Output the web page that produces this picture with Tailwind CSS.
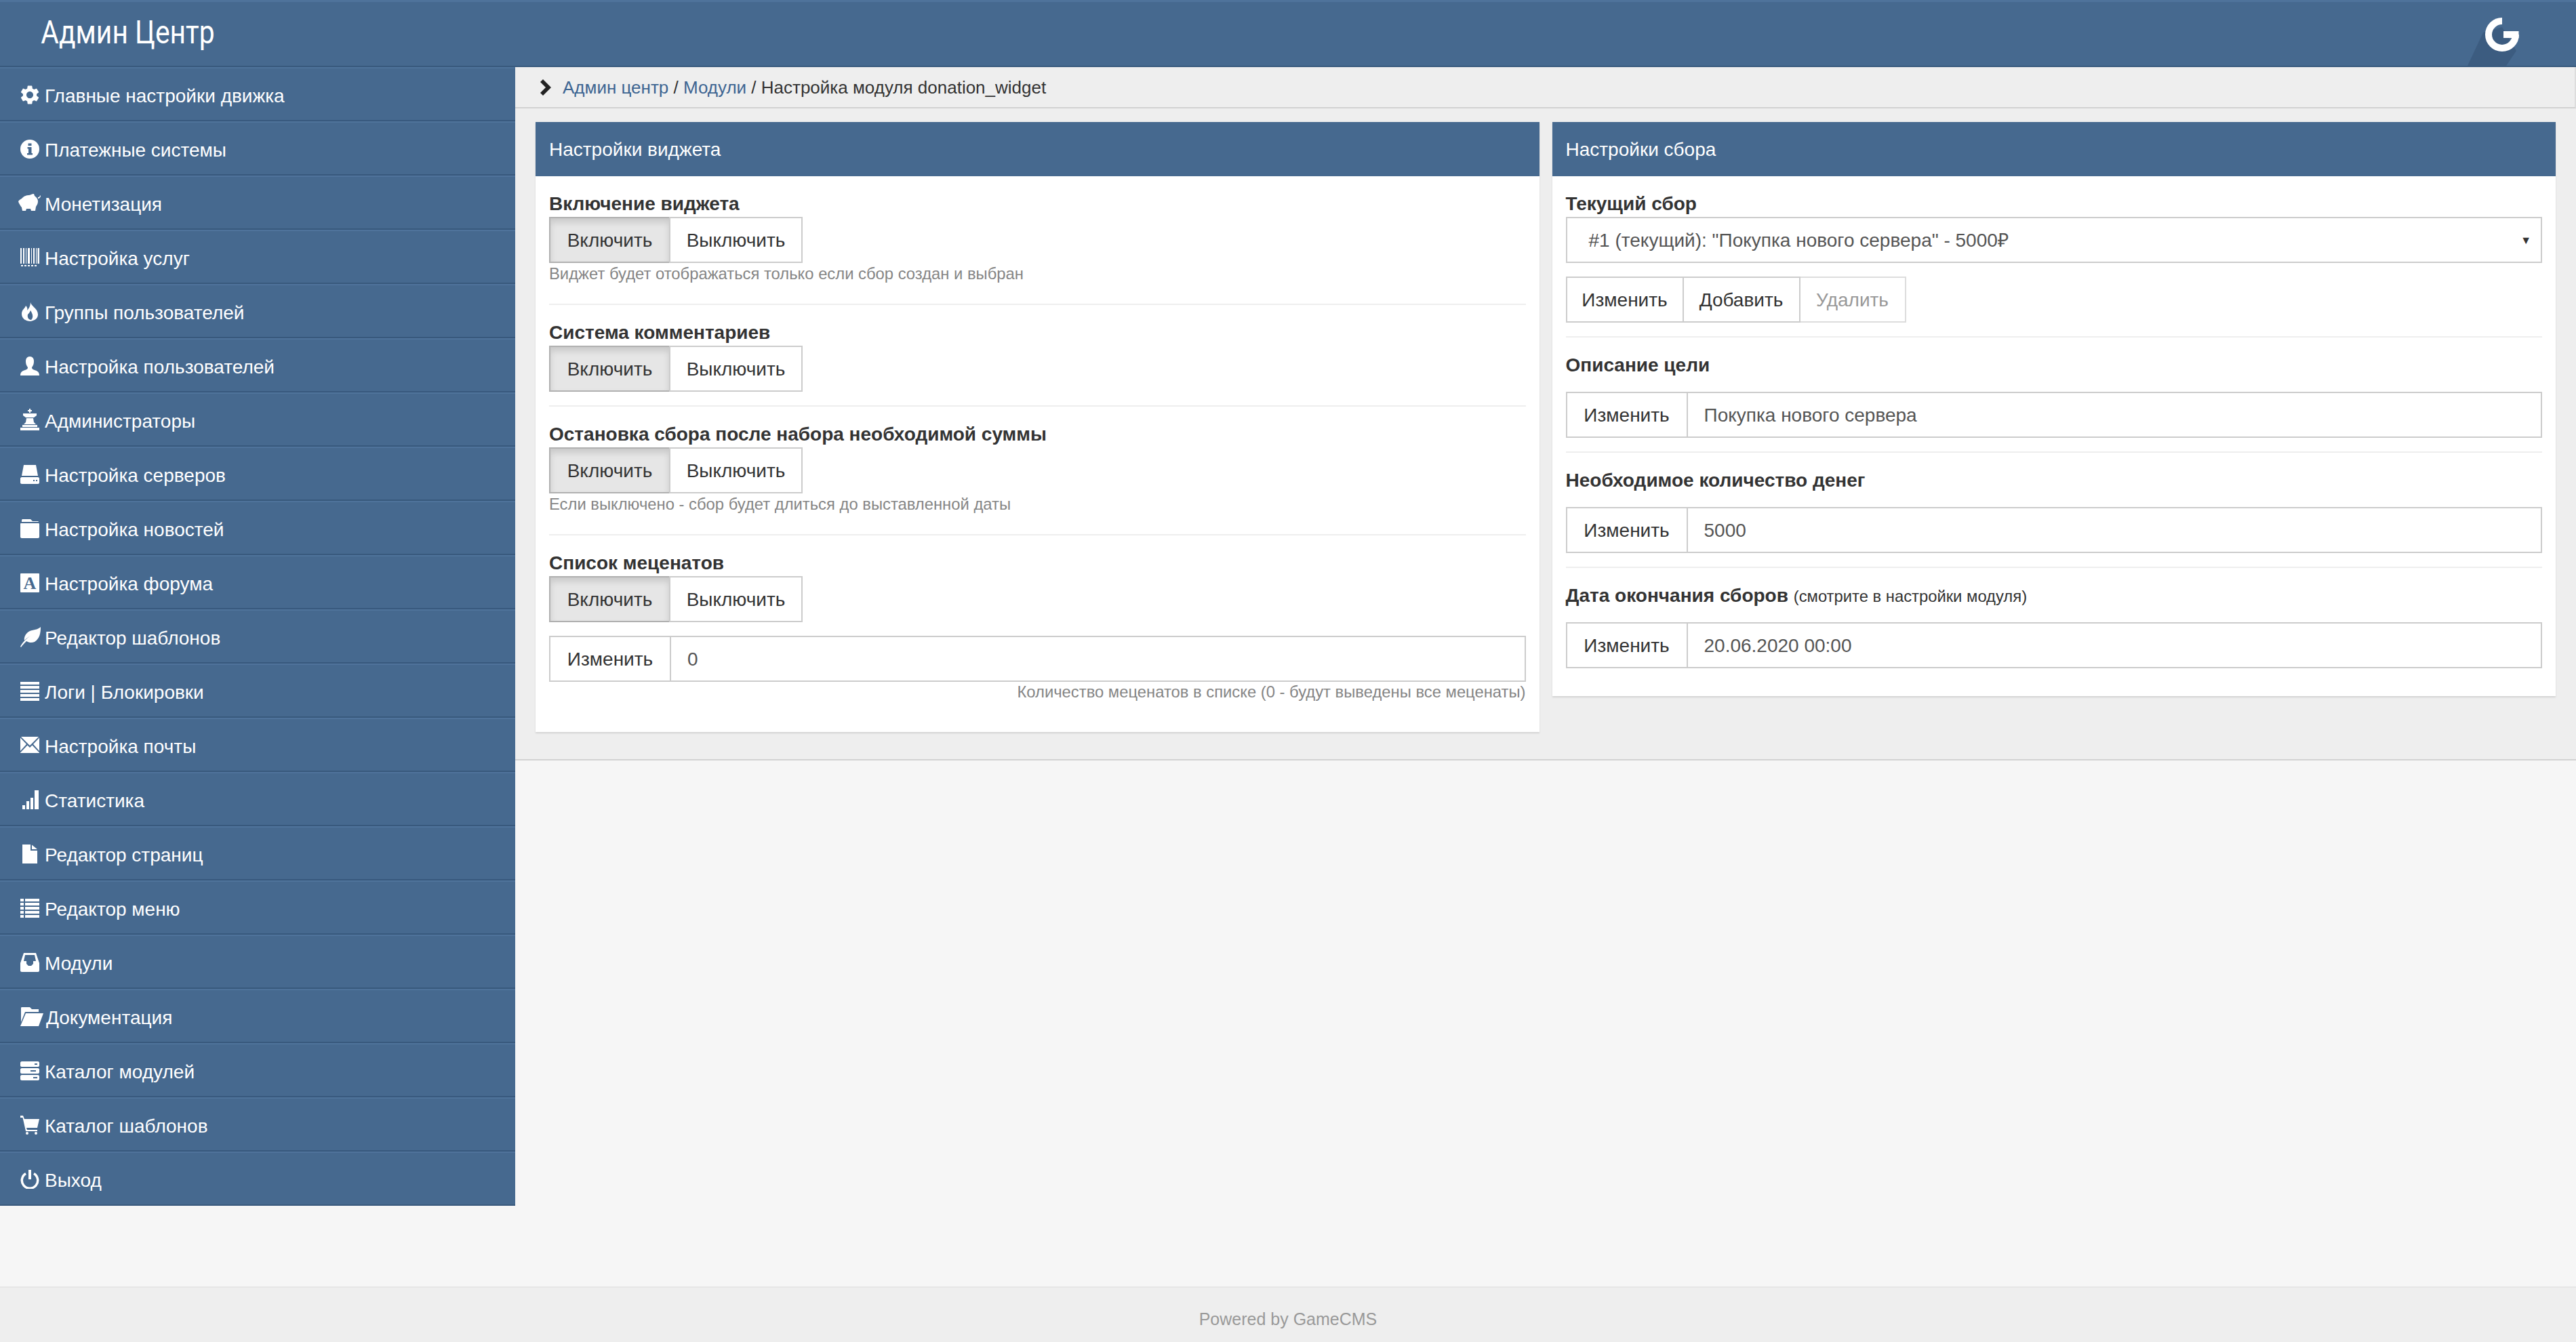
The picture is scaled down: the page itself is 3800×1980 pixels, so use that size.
<!DOCTYPE html>
<html lang="ru">
<head>
  <meta charset="UTF-8" />
  <title>Админ Центр</title>
  <script src="https://cdn.jsdelivr.net/npm/@tailwindcss/browser@4"></script>
</head>
<body class="bg-[#f6f6f6] text-[#333] font-['Liberation_Sans',sans-serif] text-[28px]">
<div class="flex flex-col h-screen overflow-hidden">

  <!-- шапка -->
  <header class="h-[99px] shrink-0 flex items-center justify-between bg-[#46698f] border-t-[3px] border-t-[#4f739b] border-b-2 border-b-[#38597d]">
    <div class="pl-[71px] pb-[4px] text-[48px] leading-none text-white font-['Roboto',sans-serif] origin-left scale-x-[0.85]">Админ Центр</div>
    <svg class="w-[80px] h-[94px] mr-[80px] self-end" viewBox="0 3 80 94">
      <polygon points="23,48 0,97 57,97 72,75 51,40" fill="#3c5c80" />
      <path d="M51 31 A20 20 0 1 0 71 51" fill="none" stroke="#fff" stroke-width="10" />
      <rect x="53" y="46" width="22.5" height="10" fill="#fff" />
    </svg>
  </header>

  <div class="flex flex-1 min-h-0">
    <!-- меню -->
    <aside class="w-[760px] shrink-0 self-start text-white">
      <a class="flex items-center gap-[8px] h-[80px] pt-[5px] pl-[30px] bg-[#46698f] border-t-2 border-t-[#4f739b] border-b-2 border-b-[#38597d]">
        <svg class="w-[28px] h-[28px] fill-white shrink-0 mb-[4px]" viewBox="2.500 2 19 20"><path d="M19.14 12.94c.04-.3.06-.61.06-.94 0-.32-.02-.64-.07-.94l2.03-1.58c.18-.14.23-.41.12-.61l-1.92-3.32c-.12-.22-.37-.29-.59-.22l-2.39.96c-.5-.38-1.03-.7-1.62-.94l-.36-2.54c-.04-.24-.24-.41-.48-.41h-3.84c-.24 0-.43.17-.47.41l-.36 2.54c-.59.24-1.13.57-1.62.94l-2.39-.96c-.22-.08-.47 0-.59.22L2.74 8.87c-.12.21-.08.47.12.61l2.03 1.58c-.05.3-.09.63-.09.94s.02.64.07.94l-2.03 1.58c-.18.14-.23.41-.12.61l1.92 3.32c.12.22.37.29.59.22l2.39-.96c.5.38 1.03.7 1.62.94l.36 2.54c.05.24.24.41.48.41h3.84c.24 0 .44-.17.47-.41l.36-2.54c.59-.24 1.13-.56 1.62-.94l2.39.96c.22.08.47 0 .59-.22l1.92-3.32c.12-.22.07-.47-.12-.61l-2.01-1.58zM12 15.6c-1.98 0-3.6-1.62-3.6-3.6s1.62-3.6 3.6-3.6 3.6 1.62 3.6 3.6-1.62 3.6-3.6 3.6z"/></svg>
        Главные настройки движка
      </a>
      <a class="flex items-center gap-[8px] h-[80px] pt-[5px] pl-[30px] bg-[#46698f] border-t-2 border-t-[#4f739b] border-b-2 border-b-[#38597d]">
        <svg class="w-[28px] h-[28px] fill-white shrink-0 mb-[4px]" viewBox="0 0 28 28"><path fill-rule="evenodd" d="M14 0a14 14 0 1 0 0 28a14 14 0 0 0 0-28zM11.500 5.500h5v3.500h-5zM10.500 11h6v9h1.500v2.500h-8V20h2v-6.500h-1.500z"/></svg>
        Платежные системы
      </a>
      <a class="flex items-center gap-[8px] h-[80px] pt-[5px] pl-[30px] bg-[#46698f] border-t-2 border-t-[#4f739b] border-b-2 border-b-[#38597d]">
        <svg class="w-[33px] h-[26px] -ml-[3px] -mr-[2px] fill-white shrink-0 mb-[6px]" viewBox="0 0 33 26"><path d="M0 11C2 8 4 8 6 6C9 3 12 2 15 2C18 2 20 0 23 0L24 3C27 5 29 8 29 11C29 15 27 17 26 19L25 25H19L18 22H12L11 25H6L5 20C3 18 2 15 1 14ZM29 5C31 5 32 4 32 2L33 3C33 5 31 7 29 7Z"/></svg>
        Монетизация
      </a>
      <a class="flex items-center gap-[8px] h-[80px] pt-[5px] pl-[30px] bg-[#46698f] border-t-2 border-t-[#4f739b] border-b-2 border-b-[#38597d]">
        <svg class="w-[28px] h-[28px] fill-white shrink-0 mb-[4px]" viewBox="0 0 28 28"><path d="M0 0h2v23H0zM4 0h2v23H4zM8 0h1v23H8zM11 0h3v23h-3zM16 0h1v23h-1zM19 0h2v23h-2zM23 0h1v23h-1zM25.500 0H28v23h-2.500zM1 25h3v2H1zM6 25h3v2H6zM11 25h3v2h-3zM16 25h3v2h-3zM21 25h3v2h-3z"/></svg>
        Настройка услуг
      </a>
      <a class="flex items-center gap-[8px] h-[80px] pt-[5px] pl-[30px] bg-[#46698f] border-t-2 border-t-[#4f739b] border-b-2 border-b-[#38597d]">
        <svg class="w-[28px] h-[28px] fill-white shrink-0 mb-[4px]" viewBox="0 0 28 28"><path fill-rule="evenodd" d="M15 0C16 6 26 9 26 18C26 24 21 27 15 28C8 28 2 24 2 17C2 11 7 9 8 5C10 7 11 9 10 12C13 9 15 5 15 0ZM15 12C18 17 20 22 16 26C12 26 10 22 11 18C12 17 14 15 15 12Z"/></svg>
        Группы пользователей
      </a>
      <a class="flex items-center gap-[8px] h-[80px] pt-[5px] pl-[30px] bg-[#46698f] border-t-2 border-t-[#4f739b] border-b-2 border-b-[#38597d]">
        <svg class="w-[28px] h-[28px] fill-white shrink-0 mb-[4px]" viewBox="0 0 28 28"><path d="M14 0C18 0 20 3 20 7C20 11 19 13 17 16C17 18 18 19 21 20C25 21 28 23 28 28H0C0 23 3 21 7 20C10 19 11 18 11 16C9 13 8 11 8 7C8 3 10 0 14 0Z"/></svg>
        Настройка пользователей
      </a>
      <a class="flex items-center gap-[8px] h-[80px] pt-[5px] pl-[30px] bg-[#46698f] border-t-2 border-t-[#4f739b] border-b-2 border-b-[#38597d]">
        <svg class="w-[28px] h-[32px] fill-white shrink-0 mb-[6px]" viewBox="0 0 28 32"><path d="M13 0h2v2h2v2h-2v2h-2V4h-2V2h2zM4 7h20v3l-4 3H8l-4-3zM9 14h10l1 6 3 3H5l3-3zM3 24h22v3H3zM0 28h28v4H0z"/></svg>
        Администраторы
      </a>
      <a class="flex items-center gap-[8px] h-[80px] pt-[5px] pl-[30px] bg-[#46698f] border-t-2 border-t-[#4f739b] border-b-2 border-b-[#38597d]">
        <svg class="w-[28px] h-[28px] fill-white shrink-0 mb-[4px]" viewBox="0 0 28 28"><path fill-rule="evenodd" d="M5 0H23L26 16H2ZM2 18H26C27 18 28 19 28 20V26C28 27 27 28 26 28H2C1 28 0 27 0 26V20C0 19 1 18 2 18ZM19 22v2h2v-2zM23 22v2h2v-2z"/></svg>
        Настройка серверов
      </a>
      <a class="flex items-center gap-[8px] h-[80px] pt-[5px] pl-[30px] bg-[#46698f] border-t-2 border-t-[#4f739b] border-b-2 border-b-[#38597d]">
        <svg class="w-[28px] h-[28px] fill-white shrink-0 mb-[4px]" viewBox="0 0 28 28"><path d="M3 0H15L18 3H25C26 3 27 3 27 4H2C2 3 2 0 3 0ZM1 6H27C28 6 28 7 28 8V26C28 27 27 28 26 28H2C1 28 0 27 0 26V7C0 7 0 6 1 6Z"/></svg>
        Настройка новостей
      </a>
      <a class="flex items-center gap-[8px] h-[80px] pt-[5px] pl-[30px] bg-[#46698f] border-t-2 border-t-[#4f739b] border-b-2 border-b-[#38597d]">
        <svg class="w-[28px] h-[28px] shrink-0 mb-[4px]" viewBox="0 0 28 28"><rect width="28" height="28" rx="1" fill="#fff" /><text x="14" y="23" text-anchor="middle" font-family="Liberation Serif, serif" font-weight="700" font-size="26" fill="#46698f">A</text></svg>
        Настройка форума
      </a>
      <a class="flex items-center gap-[8px] h-[80px] pt-[5px] pl-[30px] bg-[#46698f] border-t-2 border-t-[#4f739b] border-b-2 border-b-[#38597d]">
        <svg class="w-[30px] h-[30px] -mr-[2px] fill-white shrink-0 mb-[4px]" viewBox="0 0 30 30"><path d="M30 0C30 8 29 17 21 22C17 24 12 23 9 21C6 24 3 27 1 30L0 29C3 23 9 17 15 13C11 15 8 18 6 20C5 15 8 9 14 6C20 4 26 4 30 0Z"/></svg>
        Редактор шаблонов
      </a>
      <a class="flex items-center gap-[8px] h-[80px] pt-[5px] pl-[30px] bg-[#46698f] border-t-2 border-t-[#4f739b] border-b-2 border-b-[#38597d]">
        <svg class="w-[28px] h-[28px] fill-white shrink-0 mb-[4px]" viewBox="0 0 28 28"><path d="M0 0h28v4H0zM0 6h28v4H0zM0 12h28v4H0zM0 18h28v4H0zM0 24h28v4H0z"/></svg>
        Логи | Блокировки
      </a>
      <a class="flex items-center gap-[8px] h-[80px] pt-[5px] pl-[30px] bg-[#46698f] border-t-2 border-t-[#4f739b] border-b-2 border-b-[#38597d]">
        <svg class="w-[28px] h-[24px] fill-white shrink-0 mb-[6px]" viewBox="0 0 28 24"><path d="M1 0H27L14 13ZM0 1.500L9 11 0 21ZM28 1.500L19 11 28 21ZM10.500 12.500L14 16 17.500 12.500 28 23.500V24H0V23.500Z"/></svg>
        Настройка почты
      </a>
      <a class="flex items-center gap-[8px] h-[80px] pt-[5px] pl-[30px] bg-[#46698f] border-t-2 border-t-[#4f739b] border-b-2 border-b-[#38597d]">
        <svg class="w-[28px] h-[28px] fill-white shrink-0 mb-[4px]" viewBox="0 0 28 28"><path d="M3 22h4v6H3zM9 16h4v12H9zM15 11h4v17h-4zM21 0h6v28h-6z"/></svg>
        Статистика
      </a>
      <a class="flex items-center gap-[8px] h-[80px] pt-[5px] pl-[30px] bg-[#46698f] border-t-2 border-t-[#4f739b] border-b-2 border-b-[#38597d]">
        <svg class="w-[28px] h-[28px] fill-white shrink-0 mb-[4px]" viewBox="0 0 28 28"><path d="M3 0H15V9H25V28H3ZM17 0.500L25 7H17Z"/></svg>
        Редактор страниц
      </a>
      <a class="flex items-center gap-[8px] h-[80px] pt-[5px] pl-[30px] bg-[#46698f] border-t-2 border-t-[#4f739b] border-b-2 border-b-[#38597d]">
        <svg class="w-[28px] h-[28px] fill-white shrink-0 mb-[4px]" viewBox="0 0 28 28"><path d="M0 0h5v4H0zM7 0h21v4H7zM0 6h5v4H0zM7 6h21v4H7zM0 12h5v4H0zM7 12h21v4H7zM0 18h5v4H0zM7 18h21v4H7zM0 24h5v4H0zM7 24h21v4H7z"/></svg>
        Редактор меню
      </a>
      <a class="flex items-center gap-[8px] h-[80px] pt-[5px] pl-[30px] bg-[#46698f] border-t-2 border-t-[#4f739b] border-b-2 border-b-[#38597d]">
        <svg class="w-[28px] h-[28px] fill-white shrink-0 mb-[4px]" viewBox="0 0 28 28"><path fill-rule="evenodd" d="M5 0H23L28 15V26C28 27 27 28 26 28H2C1 28 0 27 0 26V15ZM7 3L5 12H9V16L12 19H16L19 16V12H23L21 3Z"/></svg>
        Модули
      </a>
      <a class="flex items-center gap-[6px] h-[80px] pt-[5px] pl-[30px] bg-[#46698f] border-t-2 border-t-[#4f739b] border-b-2 border-b-[#38597d]">
        <svg class="w-[34px] h-[28px] -mr-[2px] fill-white shrink-0 mb-[4px]" viewBox="0 0 34 28"><path d="M2 0H14L17 3H27V7H7L1 22V2C1 1 1 0 2 0ZM8 9H34L27 28H0Z"/></svg>
        Документация
      </a>
      <a class="flex items-center gap-[8px] h-[80px] pt-[5px] pl-[30px] bg-[#46698f] border-t-2 border-t-[#4f739b] border-b-2 border-b-[#38597d]">
        <svg class="w-[28px] h-[28px] fill-white shrink-0 mb-[4px]" viewBox="0 0 28 28"><path fill-rule="evenodd" d="M2 0H26C27 0 28 1 28 2V6C28 7 27 8 26 8H2C1 8 0 7 0 6V2C0 1 1 0 2 0ZM21 3v2h4V3zM2 10H26C27 10 28 11 28 12V16C28 17 27 18 26 18H2C1 18 0 17 0 16V12C0 11 1 10 2 10ZM15 13v2h8v-2zM2 20H26C27 20 28 21 28 22V26C28 27 27 28 26 28H2C1 28 0 27 0 26V22C0 21 1 20 2 20ZM19 23v2h6v-2z"/></svg>
        Каталог модулей
      </a>
      <a class="flex items-center gap-[8px] h-[80px] pt-[5px] pl-[30px] bg-[#46698f] border-t-2 border-t-[#4f739b] border-b-2 border-b-[#38597d]">
        <svg class="w-[28px] h-[28px] fill-white shrink-0 mb-[4px]" viewBox="0 0 28 28"><path d="M0 0H4L6 5H28L25 18H9L10 21H25V23H8L3.500 3H0ZM10 24a2 2 0 1 1 0 4a2 2 0 0 1 0-4zM23 24a2 2 0 1 1 0 4a2 2 0 0 1 0-4z"/></svg>
        Каталог шаблонов
      </a>
      <a class="flex items-center gap-[8px] h-[80px] pt-[5px] pl-[30px] bg-[#46698f] border-t-2 border-t-[#4f739b] border-b-2 border-b-[#38597d]">
        <svg class="w-[28px] h-[28px] shrink-0 mb-[4px]" viewBox="0 0 28 28"><path d="M8 5.500A11.700 11.700 0 1 0 20 5.500" fill="none" stroke="#fff" stroke-width="3.500" /><rect x="12" y="0" width="4" height="14" fill="#fff" /></svg>
        Выход
      </a>
    </aside>

    <main class="flex-1 min-w-0">
      <!-- хлебные крошки -->
      <div class="h-[61px] flex items-center gap-[16px] pl-[36px] bg-[#eee] border-b-2 border-b-[#d2d2d2] border-r-2 border-r-[#ddd] text-[26px]">
        <svg class="w-[18px] h-[24px] fill-[#222]" viewBox="0 0 18 24"><path d="M5 0L17 12 5 24 1 20 9 12 1 4Z"/></svg>
        <div class="pt-[2px]"><a class="text-[#3d6592]">Админ центр</a> / <a class="text-[#3d6592]">Модули</a> / Настройка модуля donation_widget</div>
      </div>

      <section class="grid grid-cols-2 items-start gap-[19px] px-[30px] pt-[20px] pb-[40px] bg-[#eee] border-b-2 border-b-[#d2d2d2]">
        <!-- виджет -->
        <div class="bg-white shadow-[0_2px_2px_#d4d4d4]">
          <div class="h-[80px] flex items-center px-[20px] pt-[1px] bg-[#46698f] text-white">Настройки виджета</div>
          <div class="px-[20px] pt-[20px] pb-[40px]">
            <div class="h-[40px] font-bold leading-[42px]">Включение виджета</div>
            <div class="flex h-[68px]">
              <button class="w-[177px] pt-[1px] border-2 border-[#b0b0b0] border-r-0 bg-[#e6e6e6] shadow-[inset_0_6px_10px_rgba(0,0,0,0.125)]">Включить</button>
              <button class="w-[197px] pt-[1px] border-2 border-[#ccc] bg-white">Выключить</button>
            </div>
            <div class="h-[32px] leading-[32px] text-[23.800px] text-[#858585]">Виджет будет отображаться только если сбор создан и выбран</div>
            <div class="mt-[28px] h-[2px] bg-[#eee]"></div>

            <div class="mt-[20px] h-[40px] font-bold leading-[42px]">Система комментариев</div>
            <div class="flex h-[68px]">
              <button class="w-[177px] pt-[1px] border-2 border-[#b0b0b0] border-r-0 bg-[#e6e6e6] shadow-[inset_0_6px_10px_rgba(0,0,0,0.125)]">Включить</button>
              <button class="w-[197px] pt-[1px] border-2 border-[#ccc] bg-white">Выключить</button>
            </div>
            <div class="mt-[20px] h-[2px] bg-[#eee]"></div>

            <div class="mt-[20px] h-[40px] font-bold leading-[42px]">Остановка сбора после набора необходимой суммы</div>
            <div class="flex h-[68px]">
              <button class="w-[177px] pt-[1px] border-2 border-[#b0b0b0] border-r-0 bg-[#e6e6e6] shadow-[inset_0_6px_10px_rgba(0,0,0,0.125)]">Включить</button>
              <button class="w-[197px] pt-[1px] border-2 border-[#ccc] bg-white">Выключить</button>
            </div>
            <div class="h-[32px] leading-[32px] text-[23.800px] text-[#858585]">Если выключено - сбор будет длиться до выставленной даты</div>
            <div class="mt-[28px] h-[2px] bg-[#eee]"></div>

            <div class="mt-[20px] h-[40px] font-bold leading-[42px]">Список меценатов</div>
            <div class="flex h-[68px]">
              <button class="w-[177px] pt-[1px] border-2 border-[#b0b0b0] border-r-0 bg-[#e6e6e6] shadow-[inset_0_6px_10px_rgba(0,0,0,0.125)]">Включить</button>
              <button class="w-[197px] pt-[1px] border-2 border-[#ccc] bg-white">Выключить</button>
            </div>
            <div class="mt-[20px] flex h-[68px]">
              <button class="w-[180px] shrink-0 pt-[1px] border-2 border-[#ccc] bg-white">Изменить</button>
              <div class="flex-1 flex items-center pl-[24px] pt-[1px] border-2 border-l-0 border-[#ccc] text-[#555]">0</div>
            </div>
            <div class="h-[34px] leading-[30px] text-right text-[23.800px] text-[#858585]">Количество меценатов в списке (0 - будут выведены все меценаты)</div>
          </div>
        </div>

        <!-- сбор -->
        <div class="bg-white shadow-[0_2px_2px_#d4d4d4]">
          <div class="h-[80px] flex items-center px-[20px] pt-[1px] bg-[#46698f] text-white">Настройки сбора</div>
          <div class="px-[20px] pt-[20px] pb-[41px]">
            <div class="h-[40px] font-bold leading-[42px]">Текущий сбор</div>
            <div class="flex h-[68px] items-center justify-between pl-[32px] pr-[14px] pt-[1px] border-2 border-[#ccc] text-[#555]">
              <span>#1 (текущий): "Покупка нового сервера" - 5000₽</span>
              <span class="text-[16px] text-[#333]">▼</span>
            </div>
            <div class="mt-[20px] flex h-[68px]">
              <button class="w-[174px] pt-[1px] border-2 border-[#ccc] bg-white">Изменить</button>
              <button class="w-[172px] pt-[1px] border-2 border-l-0 border-[#ccc] bg-white">Добавить</button>
              <button class="w-[156px] pt-[1px] border-2 border-l-0 border-[#ddd] bg-white text-[#999]">Удалить</button>
            </div>
            <div class="mt-[20px] h-[2px] bg-[#eee]"></div>

            <div class="mt-[20px] h-[40px] font-bold leading-[42px]">Описание цели</div>
            <div class="mt-[20px] flex h-[68px]">
              <button class="w-[180px] shrink-0 pt-[1px] border-2 border-[#ccc] bg-white">Изменить</button>
              <div class="flex-1 flex items-center pl-[24px] pt-[1px] border-2 border-l-0 border-[#ccc] text-[#555]">Покупка нового сервера</div>
            </div>
            <div class="mt-[20px] h-[2px] bg-[#eee]"></div>

            <div class="mt-[20px] h-[40px] font-bold leading-[42px]">Необходимое количество денег</div>
            <div class="mt-[20px] flex h-[68px]">
              <button class="w-[180px] shrink-0 pt-[1px] border-2 border-[#ccc] bg-white">Изменить</button>
              <div class="flex-1 flex items-center pl-[24px] pt-[1px] border-2 border-l-0 border-[#ccc] text-[#555]">5000</div>
            </div>
            <div class="mt-[20px] h-[2px] bg-[#eee]"></div>

            <div class="mt-[20px] h-[40px] font-bold leading-[42px]">Дата окончания сборов <span class="font-normal text-[23.800px]">(смотрите в настройки модуля)</span></div>
            <div class="mt-[20px] flex h-[68px]">
              <button class="w-[180px] shrink-0 pt-[1px] border-2 border-[#ccc] bg-white">Изменить</button>
              <div class="flex-1 flex items-center pl-[24px] pt-[1px] border-2 border-l-0 border-[#ccc] text-[#555]">20.06.2020 00:00</div>
            </div>
          </div>
        </div>
      </section>
    </main>
  </div>

  <footer class="h-[82px] shrink-0 flex items-center justify-center pt-[14px] bg-[#eee] border-t-2 border-t-[#e6e6e6] text-[25px] text-[#999]">Powered by GameCMS</footer>
</div>
</body>
</html>
